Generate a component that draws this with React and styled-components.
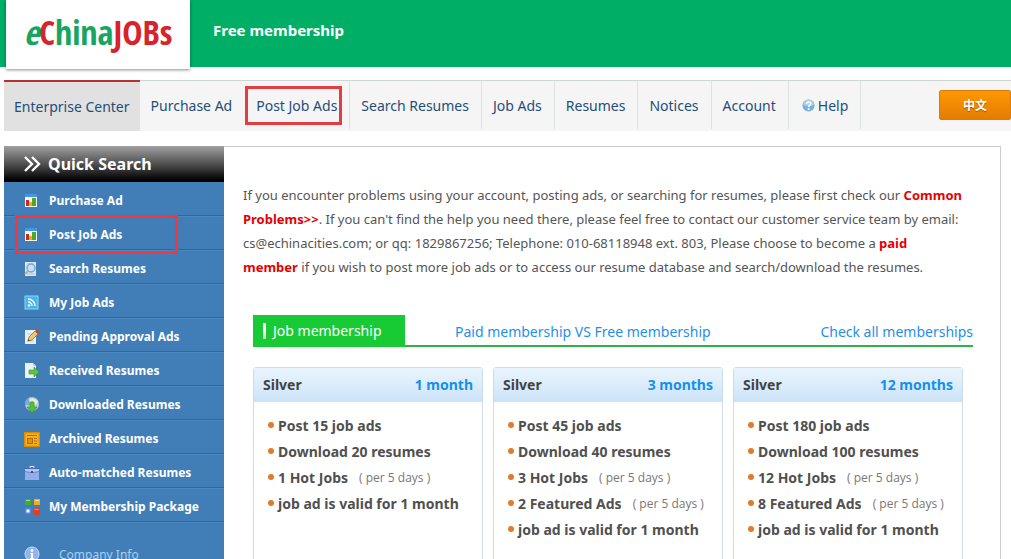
import React from 'react';
import styled, { createGlobalStyle, css } from 'styled-components';

const GlobalStyle = createGlobalStyle`
    * { box-sizing: border-box; }
    html { scrollbar-width: none; }
    body {
        margin: 0;
        background: #fff;
        color: #555;
        font-family: 'Noto Sans', 'Open Sans', 'Noto Sans CJK SC', sans-serif;
        font-size: 14px;
    }
    a { text-decoration: none; }
    ul { list-style: none; margin: 0; padding: 0; }
`;

const HeaderWrapper = styled.header`
    display: flex;
    align-items: flex-start;
    height: 67px;
    padding-left: 6px;
    background: #00ae66;
`;

const LogoBox = styled.a`
    display: flex;
    align-items: center;
    justify-content: center;
    width: 184px;
    height: 69px;
    padding-bottom: 6px;
    background: #fff;
    box-shadow: 0 1px 3px rgba(0, 0, 0, 0.45);
    color: #16a562;
    font-family: 'Liberation Sans Narrow', 'Open Sans Condensed', 'Roboto Condensed', 'DejaVu Sans Condensed', sans-serif;
    font-size: 34px;
    font-weight: 700;
    line-height: 40px;

    span { color: #d7232b; }
`;

const MembershipLabel = styled.strong`
    margin-left: 23px;
    color: #fff;
    font-size: 15px;
    line-height: 60px;
`;

const NavBar = styled.nav`
    display: flex;
    align-items: flex-start;
    height: 51px;
    margin: 13px 0 0 4px;
    background: #f5f5f5;
    border-top: 1px solid #cdd6d3;
`;

const NavLink = styled.a`
    position: relative;
    display: flex;
    align-items: center;
    height: 48px;
    padding: 0 12px 0 11px;
    border-right: 1px solid ${({ $divider }) => ($divider ? '#dde3e1' : 'transparent')};
    color: #1f4e79;
    font-size: 14px;
    white-space: nowrap;

    ${({ $active }) => $active && css`
        height: 51px;
        margin-top: -1px;
        padding: 0 10px;
        background: #e1e1e1;
        border-top: 2px solid #b9312f;
        border-right: 0;
    `}

    svg { margin: 0 3px 0 2px; }
`;

const NavMark = styled.span`
    position: absolute;
    inset: 5px 7px 4px 0;
    border: 3px solid #e23d40;
`;

const LanguageButton = styled.button`
    width: 72px;
    height: 30px;
    margin: 9px 0 0 auto;
    padding: 0;
    border: 1px solid #dd7c0a;
    border-radius: 2px;
    background: linear-gradient(#fd9803, #e47c02);
    color: #fff;
    font-family: 'Open Sans', 'Noto Sans CJK SC', sans-serif;
    font-size: 12px;
    font-weight: 700;
    text-shadow: 0 1px 1px rgba(0, 0, 0, 0.35);
`;

const Layout = styled.div`
    display: flex;
    margin: 15px 10px 0 4px;
`;

const Sidebar = styled.aside`
    flex: none;
    width: 220px;
    background: #417eb8;
`;

const SidebarTitle = styled.h2`
    display: flex;
    align-items: center;
    gap: 7px;
    height: 36px;
    margin: 0;
    padding-left: 19px;
    background: linear-gradient(#a0a0a0, #505050 50%, #000 95%);
    color: #fff;
    font-size: 16px;
`;

const SidebarLink = styled.a`
    position: relative;
    display: flex;
    align-items: center;
    gap: 9px;
    height: 34px;
    padding: 4px 0 0 20px;
    border-bottom: 1px solid #2b68a3;
    box-shadow: 0 1px 0 #4b88c0;
    color: #fff;
    font-size: 12px;
    font-weight: 700;
`;

const SidebarMark = styled.span`
    position: absolute;
    z-index: 1;
    inset: -1px 46px -5px 11px;
    border: 3px solid #f4373d;
`;

const SidebarInfo = styled.a`
    display: flex;
    align-items: center;
    gap: 19px;
    height: 34px;
    margin-top: 15px;
    padding-left: 20px;
    color: #a5d0f3;
    font-size: 12px;
`;

const Content = styled.main`
    flex: 1;
    min-width: 0;
    padding: 36px 19px 0;
    border: 1px solid #ccc;
    border-left: 0;
    border-bottom: 0;
`;

const Intro = styled.p`
    margin: 0;
    font-size: 13px;
    line-height: 24px;

    a { color: #e60000; font-weight: 700; }
`;

const Plans = styled.section`
    margin: 36px 8px 0 10px;
`;

const TabBar = styled.div`
    display: flex;
    align-items: flex-start;
    height: 32px;
    border-bottom: 2px solid #2fb24c;
    line-height: 34px;
    font-size: 14px;
`;

const ActiveTab = styled.button`
    display: flex;
    align-items: center;
    gap: 7px;
    width: 152px;
    height: 32px;
    padding: 0 10px;
    border: 0;
    background: #18cb35;
    color: #fff;
    font: inherit;

    &::before {
        content: '';
        width: 3px;
        height: 16px;
        background: linear-gradient(#fff 60%, #b5d8ba);
    }
`;

const TabLink = styled.a`
    margin-left: ${({ $end }) => ($end ? 'auto' : '50px')};
    color: #1f8fe6;
`;

const CardGrid = styled.div`
    display: grid;
    grid-template-columns: repeat(3, 1fr);
    gap: 10px;
    margin: 20px 10px 0 0;
`;

const Card = styled.article`
    min-height: 240px;
    border: 1px solid #cbdcea;
    border-radius: 3px 3px 0 0;
`;

const CardHead = styled.h3`
    display: flex;
    justify-content: space-between;
    margin: 0;
    padding: 0 9px;
    background: linear-gradient(#e9f5fd, #cce3f9);
    color: #444;
    font-size: 14px;
    line-height: 34px;

    span:last-child { color: #1590ea; }
`;

const FeatureList = styled.ul`
    padding: 10px 0 0 14px;
`;

const Feature = styled.li`
    display: flex;
    align-items: center;
    height: 26px;
    font-size: 14px;
    font-weight: 700;
    color: #505050;
    white-space: nowrap;

    &::before {
        content: '';
        width: 6px;
        height: 6px;
        margin-right: 4px;
        border-radius: 50%;
        background: #e27a2c;
    }

    small {
        margin-left: 11px;
        font-family: 'Open Sans', sans-serif;
        font-size: 12px;
        font-weight: 400;
        color: #777;
    }
`;

const Icon = ({ children, size = 16 }) => (
    <svg width={size} height={size} viewBox="0 0 16 16" aria-hidden="true">{children}</svg>
);

const ChartIcon = () => (
    <Icon>
        <rect x="1" y="2" width="12" height="12" fill="#f4f8fb" />
        <rect x="1" y="1" width="12" height="3" fill="#4a94e8" />
        <rect x="2" y="7" width="3" height="6" fill="#d0271d" />
        <rect x="5" y="9" width="3" height="4" fill="#e9b01c" />
        <rect x="8" y="5" width="4" height="8" fill="#4bab25" />
    </Icon>
);

const SearchDocIcon = () => (
    <Icon>
        <path d="M1 1h11v14H1z" fill="#dce9f5" />
        <path d="M3 3h7M3 13h8" stroke="#a9c3dc" />
        <circle cx="7" cy="7" r="4" fill="#c3e2f9" stroke="#7fa5c7" strokeWidth="1.5" />
        <path d="M4 10l-3 3" stroke="#d9a75a" strokeWidth="2" />
    </Icon>
);

const FeedIcon = () => (
    <Icon>
        <rect x="1" y="1" width="13" height="13" fill="#45b5ec" stroke="#8bd6f8" />
        <path d="M4 7a4 4 0 0 1 4 4M4 4a7 7 0 0 1 7 7" fill="none" stroke="#fff" strokeWidth="1.5" />
        <circle cx="5" cy="10.5" r="1.2" fill="#fff" />
    </Icon>
);

const PencilIcon = () => (
    <Icon>
        <path d="M1 1h11v14H1z" fill="#e8f0f8" />
        <path d="M3 5h6M3 12h7" stroke="#b8cbdc" />
        <path d="M4 12l1-4 6-6 3 3-6 6z" fill="#f2c86b" stroke="#8f7242" strokeWidth=".8" />
        <path d="M11 2l2-2 3 3-2 2z" fill="#c44242" />
        <path d="M4 12l.4-1.8L6 11.5z" fill="#333" />
    </Icon>
);

const ReceivedIcon = () => (
    <Icon>
        <path d="M1 0h8l3 3v12H1z" fill="#eaf2f9" />
        <path d="M9 0v3h3" fill="#b9d0e3" />
        <path d="M5 7h5V4l5 5-5 5v-3H5z" fill="#5cc43d" stroke="#3d9a2a" strokeWidth=".6" />
    </Icon>
);

const DownloadIcon = () => (
    <Icon>
        <circle cx="8" cy="7" r="7" fill="#b7cbe0" />
        <path d="M2 5a7 7 0 0 1 12 0l-3 3-3-5-3 5z" fill="#e9f0d5" />
        <path d="M1 8a7 7 0 0 1 4-7l1 7z" fill="#7aa9dc" />
        <path d="M6 5h4v5h3l-5 6-5-6h3z" fill="#54c034" stroke="#3c8f2a" strokeWidth=".6" />
    </Icon>
);

const ArchiveIcon = () => (
    <Icon>
        <rect x=".7" y="1.7" width="14.6" height="13.6" fill="#f6b21d" stroke="#d88c08" strokeWidth="1.4" />
        <path d="M3 4.5h10" stroke="#b46a05" />
        <rect x="3.5" y="7.5" width="5" height="5" fill="#dd9410" stroke="#b46a05" />
        <path d="M10 7.5h3M10 10h3M10 12.5h3" stroke="#b46a05" />
    </Icon>
);

const BriefcaseIcon = () => (
    <Icon>
        <path d="M6 3V1.5h4V3" fill="none" stroke="#dbe4ff" />
        <rect x="1" y="3" width="14" height="12" fill="#93aeea" />
        <path d="M1 3h14v3l-5 1H6L1 6z" fill="#b3c7f5" />
        <path d="M1 3.5h14" stroke="#4c66ad" />
        <path d="M1 6.5l5 1h4l5-1" fill="none" stroke="#6f8acb" />
        <rect x="7" y="6" width="2" height="2" fill="#334a8a" />
    </Icon>
);

const BlocksIcon = () => (
    <Icon>
        <rect x="1" y="0" width="6" height="6" fill="#3fae29" />
        <rect x="10" y="0" width="6" height="6" fill="#f2ad1b" />
        <rect x="1" y="9" width="6" height="6" fill="#4f86e0" />
        <rect x="2.5" y="10.5" width="3" height="3" fill="#fff" />
        <rect x="9" y="9" width="7" height="7" rx="2" fill="#e23c27" />
        <path d="M2 1.5h4M11 1.5h4M10.5 10.5h4" stroke="#fff" strokeOpacity=".5" />
    </Icon>
);

const InfoIcon = () => (
    <Icon>
        <circle cx="8" cy="8" r="7" fill="#8fb4ee" stroke="#c9dafa" />
        <circle cx="8" cy="4.5" r="1.4" fill="#fff" />
        <path d="M6.5 7H9v5h1v1H6v-1h1V8h-.5z" fill="#fff" />
    </Icon>
);

const HelpIcon = () => (
    <Icon size={13}>
        <circle cx="8" cy="8" r="7.5" fill="#78b2dc" />
        <path d="M1.5 7a6.5 6.5 0 0 1 13 0q-6 3-13 0" fill="#a9d1ec" />
        <path d="M5.5 6.2c0-3.500 5.300-3.200 5.300-.3 0 2-2.700 2-2.700 3.900" fill="none" stroke="#fff" strokeWidth="1.9" />
        <circle cx="8.1" cy="12.2" r="1.2" fill="#fff" />
    </Icon>
);

const ChevronsIcon = () => (
    <svg width="18" height="18" viewBox="0 0 18 18" fill="none" stroke="#fff" strokeWidth="2.4" aria-hidden="true">
        <path d="M2 2l7 7-7 7M9 2l7 7-7 7" />
    </svg>
);

const navItems = [
    { label: 'Enterprise Center', active: true },
    { label: 'Purchase Ad' },
    { label: 'Post Job Ads', marked: true, divider: true },
    { label: 'Search Resumes', divider: true },
    { label: 'Job Ads', divider: true },
    { label: 'Resumes', divider: true },
    { label: 'Notices', divider: true },
    { label: 'Account', divider: true },
    { label: 'Help', divider: true, icon: HelpIcon },
];

const sidebarItems = [
    { label: 'Purchase Ad', icon: ChartIcon },
    { label: 'Post Job Ads', icon: ChartIcon, marked: true },
    { label: 'Search Resumes', icon: SearchDocIcon },
    { label: 'My Job Ads', icon: FeedIcon },
    { label: 'Pending Approval Ads', icon: PencilIcon },
    { label: 'Received Resumes', icon: ReceivedIcon },
    { label: 'Downloaded Resumes', icon: DownloadIcon },
    { label: 'Archived Resumes', icon: ArchiveIcon },
    { label: 'Auto-matched Resumes', icon: BriefcaseIcon },
    { label: 'My Membership Package', icon: BlocksIcon },
];

const plans = [
    {
        period: '1 month',
        features: [['Post 15 job ads'], ['Download 20 resumes'], ['1 Hot Jobs', true], ['job ad is valid for 1 month']],
    },
    {
        period: '3 months',
        features: [['Post 45 job ads'], ['Download 40 resumes'], ['3 Hot Jobs', true], ['2 Featured Ads', true], ['job ad is valid for 1 month']],
    },
    {
        period: '12 months',
        features: [['Post 180 job ads'], ['Download 100 resumes'], ['12 Hot Jobs', true], ['8 Featured Ads', true], ['job ad is valid for 1 month']],
    },
];

const Header = () => (
    <HeaderWrapper>
        <LogoBox href="#"><em>e</em><span>C</span>hina<span>JOBs</span></LogoBox>
        <MembershipLabel>Free membership</MembershipLabel>
    </HeaderWrapper>
);

const Navigation = () => (
    <NavBar>
        {navItems.map(({ label, active, marked, divider, icon: ItemIcon }) => (
            <NavLink key={label} href="#" $active={active} $divider={divider}>
                {ItemIcon && <ItemIcon />}
                {label}
                {marked && <NavMark />}
            </NavLink>
        ))}
        <LanguageButton type="button">中文</LanguageButton>
    </NavBar>
);

const QuickSearch = () => (
    <Sidebar>
        <SidebarTitle><ChevronsIcon />Quick Search</SidebarTitle>
        {sidebarItems.map(({ label, icon: ItemIcon, marked }) => (
            <SidebarLink key={label} href="#">
                <ItemIcon />
                {label}
                {marked && <SidebarMark />}
            </SidebarLink>
        ))}
        <SidebarInfo href="#"><InfoIcon />Company Info</SidebarInfo>
    </Sidebar>
);

const PlanCard = ({ period, features }) => (
    <Card>
        <CardHead><span>Silver</span><span>{period}</span></CardHead>
        <FeatureList>
            {features.map(([text, limited]) => (
                <Feature key={text}>{text}{limited && <small>( per 5 days )</small>}</Feature>
            ))}
        </FeatureList>
    </Card>
);

const App = () => (
    <>
        <GlobalStyle />
        <Header />
        <Navigation />
        <Layout>
            <QuickSearch />
            <Content>
                <Intro>
                    If you encounter problems using your account, posting ads, or searching for resumes, please first check our{' '}
                    <a href="#">Common Problems&gt;&gt;</a>. If you can't find the help you need there, please feel free to contact
                    our customer service team by email: cs@echinacities.com; or qq: 1829867256; Telephone: 010-68118948 ext. 803,
                    Please choose to become a <a href="#">paid<br />member</a> if you wish to post more job ads or to access our
                    resume database and search/download the resumes.
                </Intro>
                <Plans>
                    <TabBar>
                        <ActiveTab type="button">Job membership</ActiveTab>
                        <TabLink href="#">Paid membership VS Free membership</TabLink>
                        <TabLink href="#" $end>Check all memberships</TabLink>
                    </TabBar>
                    <CardGrid>
                        {plans.map((plan) => <PlanCard key={plan.period} {...plan} />)}
                    </CardGrid>
                </Plans>
            </Content>
        </Layout>
    </>
);

export default App;
